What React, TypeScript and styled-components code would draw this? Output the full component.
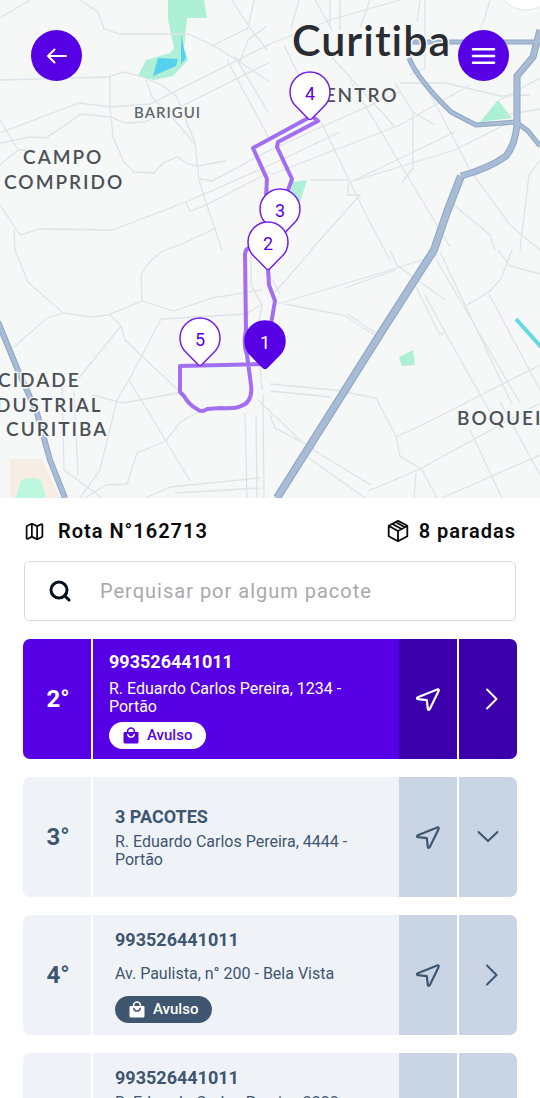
import React from 'react';
import styled, { createGlobalStyle } from 'styled-components';
import { Map as MapIcon, Search } from 'lucide-react';

const GlobalStyle = createGlobalStyle`
  *, *::before, *::after { box-sizing: border-box; }
  html, body { margin: 0; background: #fff; }
  body { font-family: Roboto, "Liberation Sans", sans-serif; color: #0a0a0c; }
  button, input { font: inherit; }
  h1, h2, p, ul { margin: 0; padding: 0; }
`;

const Screen = styled.div`
  height: 100vh;
  display: flex;
  flex-direction: column;
  overflow: hidden;
`;

const MapPanel = styled.section`
  position: relative;
  flex: none;
  height: 498px;
  background: #f6f7f7;
  overflow: hidden;
`;

const MapDrawing = styled.svg`
  display: block;
  width: 100%;
  height: 100%;
`;

const MapControls = styled.div`
  position: absolute;
  inset: 30px 31px auto;
  display: flex;
  justify-content: space-between;
`;

const RoundButton = styled.button`
  width: 51px;
  height: 51px;
  padding: 0;
  border: 0;
  border-radius: 50%;
  display: grid;
  place-items: center;
  background: #5700e6;
  color: #fff;
  cursor: pointer;
`;

const RouteHeader = styled.header`
  display: flex;
  align-items: center;
  justify-content: space-between;
  padding: 20px 24px 17px;
`;

const HeaderItem = styled.div<{ $gap: number }>`
  display: flex;
  align-items: center;
  gap: ${(p) => p.$gap}px;
`;

const HeaderTitle = styled.h1`
  font-size: 20px;
  line-height: 26px;
  font-weight: 600;
  letter-spacing: 1px;
`;

const SearchBox = styled.label`
  display: flex;
  align-items: center;
  gap: 28px;
  height: 60px;
  margin: 0 24px 18px;
  padding: 0 23px;
  border: 1px solid #d8dae2;
  border-radius: 5px;
  flex: none;
  color: #06111f;
`;

const SearchInput = styled.input`
  flex: 1;
  min-width: 0;
  border: 0;
  outline: 0;
  padding: 0;
  background: transparent;
  font-size: 20px;
  letter-spacing: 1px;
  &::placeholder { color: #a9a9ab; opacity: 1; }
`;

const StopList = styled.ul`
  list-style: none;
  display: flex;
  flex-direction: column;
  gap: 18px;
  padding: 0 23px;
`;

const StopCard = styled.li<{ $active?: boolean }>`
  --surface: ${(p) => (p.$active ? '#5700e6' : '#eff3f8')};
  --action: ${(p) => (p.$active ? '#3d00ad' : '#c9d5e5')};
  --ink: ${(p) => (p.$active ? '#ffffff' : '#3e566f')};
  --chip-ink: ${(p) => (p.$active ? '#5700e6' : '#ffffff')};
  display: flex;
  flex: none;
  gap: 2px;
  height: 120px;
  border-radius: 7px;
  overflow: hidden;
  color: var(--ink);
`;

const StopOrder = styled.div`
  flex: none;
  width: 68px;
  padding-left: 2px;
  display: grid;
  place-items: center;
  background: var(--surface);
  font-size: 24px;
  font-weight: 700;
`;

const StopBody = styled.div<{ $active?: boolean }>`
  flex: 1;
  min-width: 0;
  margin-right: -2px;
  display: flex;
  flex-direction: column;
  align-items: flex-start;
  justify-content: center;
  gap: ${(p) => (p.$active ? 6 : 4)}px;
  padding: 0 40px 0 ${(p) => (p.$active ? 16 : 22)}px;
  background: var(--surface);
`;

const StopCode = styled.h2`
  font-size: 18px;
  line-height: 24px;
  font-weight: 700;
`;

const StopAddress = styled.p`
  display: flex;
  align-items: center;
  min-height: 36px;
  font-size: 16px;
  line-height: 18px;
`;

const Chip = styled.span`
  display: inline-flex;
  align-items: center;
  gap: 8px;
  height: 27px;
  padding: 0 14px;
  border-radius: 14px;
  background: var(--ink);
  color: var(--chip-ink);
  font-size: 15px;
  font-weight: 500;
`;

const ActionButton = styled.button`
  flex: none;
  width: 58px;
  padding: 0;
  border: 0;
  display: grid;
  place-items: center;
  background: var(--action);
  color: inherit;
  cursor: pointer;
`;

const BackIcon = () => (
  <svg width="22" height="16" viewBox="0 0 22 16" fill="none" stroke="currentColor" strokeWidth="2" strokeLinecap="round" strokeLinejoin="round" aria-hidden="true">
    <path d="M20 8H2M8.500 1.500 2 8 8.500 14.500" />
  </svg>
);

const MenuIcon = () => (
  <svg width="26" height="20" viewBox="0 0 26 20" stroke="currentColor" strokeWidth="2.600" strokeLinecap="round" aria-hidden="true">
    <path d="M2 3.200H23M2 10H23M2 16.800H23" />
  </svg>
);

const ParcelIcon = () => (
  <svg width="24" height="24" viewBox="0 0 24 24" fill="none" stroke="currentColor" strokeWidth="1.800" strokeLinecap="round" strokeLinejoin="round" aria-hidden="true">
    <path d="M12 1.900 21.300 6.800V17.200L12 22.300 2.700 17.200V6.800ZM3 7 12 12 21 7M12 12V22M6.600 5 15.600 10M10 3.200 18.700 8.200" />
  </svg>
);

const SendIcon = () => (
  <svg width="26" height="26" viewBox="0 0 26 26" fill="none" stroke="currentColor" strokeWidth="2.200" strokeLinejoin="round" aria-hidden="true">
    <path d="M22.800 3.300 2.800 11.200C1.500 11.800 1.700 13 3 13.200L11.800 14.200 12.800 22.800C13 24.200 14.200 24.200 14.800 23L23.600 5C24 3.800 23.600 3.100 22.800 3.300Z" />
  </svg>
);

const ChevronIcon = ({ down }: { down?: boolean }) => (
  <svg width="22" height="22" viewBox="0 0 22 22" fill="none" stroke="currentColor" strokeWidth="2" strokeLinecap="round" strokeLinejoin="round" aria-hidden="true">
    <path d={down ? 'M1.500 6 11 15 20.500 6' : 'M10 1.500 19.500 11 10 20.500'} />
  </svg>
);

const BagIcon = () => (
  <svg width="16" height="17" viewBox="0 0 16 17" aria-hidden="true">
    <path fill="currentColor" d="M1.500 5H14.500Q15.500 5 15.500 6V15Q15.500 16.500 14 16.500H2Q.5 16.500 .5 15V6Q.5 5 1.500 5Z" />
    <path fill="none" stroke="currentColor" strokeWidth="1.600" d="M4.600 6V4.400A3.400 3.400 0 0 1 11.400 4.400V6" />
    <path fill="none" stroke="var(--ink)" strokeWidth="1.400" strokeLinecap="round" d="M4.700 7.500A3.400 3.400 0 0 0 11.300 7.500" />
  </svg>
);

const minorRoads = [
  'M0 18 30 0M80 0 98 12 104 29 120 34H188L214 46 240 62 270 82',
  'M0 80 108 77 123 72 140 76 160 84 176 96 183 112 195 143 199 180 210 215 222 250',
  'M110 76V107L113 137 124 162 134 172 154 173 163 163 177 157 188 164 198 166 226 161',
  'M0 133 79 103 110 107 150 104 270 44 330 20 400 0M0 143 30 137 46 138 81 114 110 117 126 123 144 122 180 107 270 62',
  'M0 120 18 150 0 165M18 150H36',
  'M146 80 152 97 170 115 195 144M0 205 20 235 40 229 112 230 186 202 270 165 340 132',
  'M186 202 190 211 204 206 270 172M200 179 212 181 270 150 400 92',
  'M14 230 15 250 28 282 63 313 92 317 108 315 142 301 174 311 212 298 262 290M14 347 47 318 63 313',
  'M165 250Q148 260 141 275L142 301M110 315 121 326 125 340 178 390M121 326 74 384',
  'M161 319 141 357 129 380 117 400 100 470 80 498M161 319 246 314 260 305M92 395 123 403 178 393M129 380 166 441 190 481',
  'M166 441 137 453 127 484 106 485 85 498M166 441 180 422 204 409M145 498 170 487 260 478M175 493 260 488',
  'M62 388 64 470 102 498M74 390 78 475M245 413 247 498M256 415 257 498M263 395 264 498M258 400 300 440',
  'M165 250 182 244 216 228M227 60 270 140M234 55 268 112M232 0 250 28 267 50',
  'M254 0 248 28 212 46M267 26 248 40 240 62M299 0 291 28M315 0 332 30M330 0V28M340 0V30',
  'M370 0 360 28M420 0 417 22M425 0V68L410 75',
  'M284 45 366 215 390 260M350 80 450 247M330 55 395 127M400 83H446L500 96 530 95M395 83 413 112 435 125',
  'M413 112V168L402 182M420 75 445 122 470 170 510 225 540 250M270 175 400 125 470 85',
  'M350 182 455 150 510 122M348 182V195H361M310 180H348',
  'M355 180 455 132M360 195 311 250M448 200 490 235 495 250M490 0 484 20 480 28M540 160 529 175 520 250',
  'M505 115 540 109M500 100 540 78M390 250 397 265 445 300',
  'M278 304 390 270 438 255M285 304 343 315 375 335M347 314 378 334M345 288 395 270M436 259 520 403M440 252 512 404',
  'M270 384 334 390 376 398 396 436 400 456 422 470 437 498M331 397 270 391M415 285 440 335 445 332 425 295M445 332 500 430',
  'M396 437 420 426 540 365M368 491 420 469 540 403M416 473 414 498M442 498 540 455M470 430 502 498',
  'M310 448 371 485M306 456 365 498M270 415 275 428 315 449M498 250 510 266 540 274M512 250 501 279 489 292 465 306M489 294 540 390',
  'M267 270 280 294M251 250V285L262 305 257 330 262 390M275 292 312 250M500 402 540 475',
];

const ringRoad = 'M409 58Q418 80 451 112L476 125 516 122 528 131 540 146M410 42H540';
const eastRoad = 'M540 30 533 57 517 76V125Q515 145 506 156 490 168 461 176';
const southRoad = 'M461 176 447 212 434 250 384 328 340 398 277 498';
const westRoad = 'M-2 322 17 368 37 413 50 460 65 498';

const pins = [
  { n: 4, x: 310, y: 120 },
  { n: 3, x: 280, y: 237 },
  { n: 2, x: 268, y: 270 },
  { n: 5, x: 200, y: 366 },
  { n: 1, x: 265, y: 369 },
];

const PlaceLabel = styled.text<{ $size: number; $color?: string; $track?: number }>`
  font-family: Lato, "Liberation Sans", sans-serif;
  font-size: ${(p) => p.$size}px;
  font-weight: 600;
  letter-spacing: ${(p) => p.$track ?? 2}px;
  fill: ${(p) => p.$color ?? '#4b5157'};
  stroke: #f6f7f7;
  stroke-width: 3px;
  paint-order: stroke;
`;

const PinNumber = styled.text`
  font-size: 18px;
  text-anchor: middle;
`;

const CityMap = () => (
  <MapDrawing viewBox="0 0 540 498" preserveAspectRatio="xMidYMid slice" role="img" aria-label="Mapa da rota em Curitiba">
    <rect width="540" height="498" fill="#f6f7f7" />
    <path fill="#aef0d5" d="M168 0H204L207 18H187L184 48 188 60 173 76 154 80 138 76 146 60 170 53 174 48 168 20Z" />
    <path fill="#55d0ee" d="M158 58 178 59 176 66 153 76ZM181 35 186 58 181 64Z" />
    <path fill="#aef0d5" d="M498 100 512 118 480 122ZM292 182 307 180 300 202 290 204ZM399 357 413 350 415 365 402 366Z" />
    <path fill="#f6eee4" d="M10 459H42L60 498H10Z" />
    <path fill="#bdf7df" d="M16 498 21 480Q31 476 41 480L46 498Z" />
    <g fill="none" stroke="#dde4e9" strokeWidth="1.300">
      {minorRoads.map((d) => <path key={d} d={d} />)}
    </g>
    <g fill="none" stroke="#8ea6c3" strokeLinejoin="round">
      <path strokeWidth="5" d={ringRoad} />
      <path strokeWidth="7" d={eastRoad} />
      <path strokeWidth="8" d={southRoad} />
      <path strokeWidth="6" d={westRoad} />
    </g>
    <g fill="none" stroke="#a8bcd6" strokeLinejoin="round">
      <path strokeWidth="3" d={ringRoad} />
      <path strokeWidth="5" d={eastRoad} />
      <path strokeWidth="6" d={southRoad} />
      <path strokeWidth="4" d={westRoad} />
    </g>
    <path d="M516 319 542 348" stroke="#67d9e2" strokeWidth="4" fill="none" />
    <circle cx="526" cy="-20" r="30" fill="#fff" stroke="#e4e4e4" />
    <PlaceLabel x="292" y="56" $size={43} $color="#292d31" $track={1}>Curitiba</PlaceLabel>
    <PlaceLabel x="310" y="102" $size={19}>CENTRO</PlaceLabel>
    <PlaceLabel x="134" y="118" $size={15} $color="#63686d" $track={1}>BARIGUI</PlaceLabel>
    <PlaceLabel x="23" y="164" $size={19}>CAMPO</PlaceLabel>
    <PlaceLabel x="4" y="189" $size={19}>COMPRIDO</PlaceLabel>
    <PlaceLabel x="-2" y="387" $size={19}>CIDADE</PlaceLabel>
    <PlaceLabel x="-28" y="412" $size={19}>INDUSTRIAL</PlaceLabel>
    <PlaceLabel x="6" y="436" $size={19}>CURITIBA</PlaceLabel>
    <PlaceLabel x="457" y="425" $size={19}>BOQUEIRÃO</PlaceLabel>
    <g fill="none" stroke="#8f4cf0" strokeOpacity=".8" strokeWidth="4" strokeLinejoin="round">
      <path d="M310 117 253 148 267 179 265 215M312 116 318 121 278 142 277 147 292 179 286 196" />
      <path d="M254 246Q245 248 245 254L246 330Q243 345 247 355L251 385Q253 402 241 406 236 409 221 408L207 409Q202 413 197 409 189 405 184 396L180 392V366L265 364M268 268 269 285 275 301 270 330" />
    </g>
    {pins.map(({ n, x, y }) => (
      <g key={n} transform={`translate(${x} ${y})`}>
        <path
          d="M1.500 -1Q0 0-1.500 -1L-14 -13.700A20 20 0 1 1 14 -13.700Z"
          fill={n === 1 ? '#5700e6' : '#fff'}
          stroke={n === 1 ? '#5700e6' : '#741fe8'}
          strokeWidth="1.500"
          strokeLinejoin="round"
        />
        <PinNumber y="-20" fill={n === 1 ? '#fff' : '#5700e6'}>{n}</PinNumber>
      </g>
    ))}
  </MapDrawing>
);

type Stop = { order: string; code: string; address: string; loose?: boolean; group?: boolean; active?: boolean };

const stops: Stop[] = [
  { order: '2°', code: '993526441011', address: 'R. Eduardo Carlos Pereira, 1234 - Portão', loose: true, active: true },
  { order: '3°', code: '3 PACOTES', address: 'R. Eduardo Carlos Pereira, 4444 - Portão', group: true },
  { order: '4°', code: '993526441011', address: 'Av. Paulista, n° 200 - Bela Vista', loose: true },
  { order: '5°', code: '993526441011', address: 'R. Eduardo Carlos Pereira, 2222 - Portão', loose: true },
];

export default function App() {
  return (
    <Screen>
      <GlobalStyle />
      <MapPanel>
        <CityMap />
        <MapControls>
          <RoundButton type="button" aria-label="Voltar"><BackIcon /></RoundButton>
          <RoundButton type="button" aria-label="Menu"><MenuIcon /></RoundButton>
        </MapControls>
      </MapPanel>
      <RouteHeader>
        <HeaderItem $gap={13}>
          <MapIcon size={21} strokeWidth={2} />
          <HeaderTitle>Rota N°162713</HeaderTitle>
        </HeaderItem>
        <HeaderItem $gap={9}>
          <ParcelIcon />
          <HeaderTitle as="p">8 paradas</HeaderTitle>
        </HeaderItem>
      </RouteHeader>
      <SearchBox>
        <Search size={24} strokeWidth={3} aria-hidden="true" />
        <SearchInput type="text" placeholder="Perquisar por algum pacote" aria-label="Pesquisar pacote" />
      </SearchBox>
      <StopList>
        {stops.map((stop) => (
          <StopCard key={stop.order} $active={stop.active}>
            <StopOrder>{stop.order}</StopOrder>
            <StopBody $active={stop.active}>
              <StopCode>{stop.code}</StopCode>
              <StopAddress>{stop.address}</StopAddress>
              {stop.loose && <Chip><BagIcon />Avulso</Chip>}
            </StopBody>
            <ActionButton type="button" aria-label="Navegar"><SendIcon /></ActionButton>
            <ActionButton type="button" aria-label={stop.group ? 'Expandir' : 'Abrir'}><ChevronIcon down={stop.group} /></ActionButton>
          </StopCard>
        ))}
      </StopList>
    </Screen>
  );
}
